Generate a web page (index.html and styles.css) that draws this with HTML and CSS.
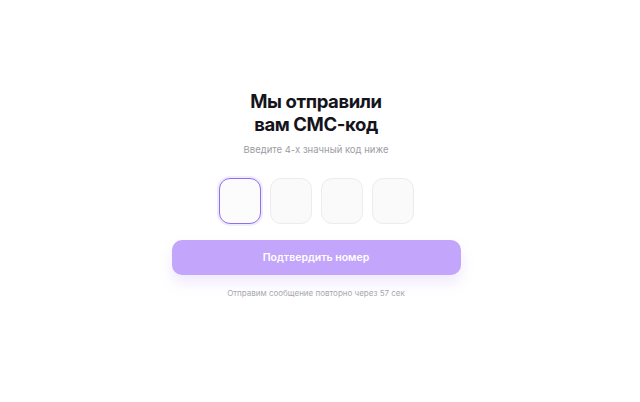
FILE: index.html
```html
<!DOCTYPE html>
<html lang="ru">
<head>
<meta charset="utf-8">
<link rel="stylesheet" href="styles.css">
</head>
<body>
<main class="page">
  <h1 class="title">Мы отправили<br>вам СМС-код</h1>
  <p class="subtitle">Введите 4-х значный код ниже</p>
  <div class="codes">
    <div class="code code-active"></div>
    <div class="code"></div>
    <div class="code"></div>
    <div class="code"></div>
  </div>
  <button class="confirm">Подтвердить номер</button>
  <p class="resend">Отправим сообщение повторно через 57 сек</p>
</main>
</body>
</html>
```
FILE: styles.css
```css
html, body {
  margin: 0;
  padding: 0;
  background: #ffffff;
}
body {
  width: 640px;
  height: 402px;
  font-family: Inter, "Noto Sans", sans-serif;
}
.page {
  display: flex;
  flex-direction: column;
  align-items: center;
  padding: 90px 8px 0 0;
}
.title {
  margin: 0;
  font-size: 18.5px;
  line-height: 23px;
  font-weight: 700;
  color: #15141c;
  text-align: center;
  letter-spacing: -0.4px;
}
.subtitle {
  margin: 7px 0 0;
  font-size: 9.5px;
  line-height: 13px;
  color: #9c9ca3;
}
.codes {
  display: flex;
  gap: 9px;
  margin-top: 22px;
}
.code {
  width: 40px;
  height: 44px;
  box-sizing: content-box;
  border: 1.5px solid #ececee;
  border-radius: 11px;
  background: #fafafa;
}
.code-active {
  border-color: #8e6ff0;
  box-shadow: 0 0 0 2px #f1ecfd;
  background: #fcfcfd;
}
.confirm {
  margin-top: 16px;
  width: 289px;
  height: 35px;
  border: none;
  border-radius: 10px;
  background: #c3a6fb;
  color: #ffffff;
  font-family: inherit;
  font-size: 10.5px;
  font-weight: 600;
  box-shadow: 0 8px 14px rgba(170, 140, 240, 0.18);
}
.resend {
  margin: 12px 0 0;
  font-size: 8px;
  line-height: 12px;
  color: #a8a8ae;
}
```
